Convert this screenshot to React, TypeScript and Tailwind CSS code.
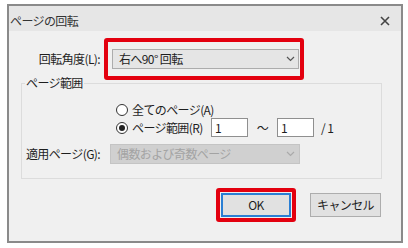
import React from 'react';

const font = { fontFamily: '"Noto Sans CJK JP", "Noto Sans", sans-serif' };

function Chevron({ color }: { color: string }) {
  return (
    <svg width="9" height="6" viewBox="0 0 9 6" className="shrink-0">
      <path d="M1 1 L4.5 4.5 L8 1" fill="none" stroke={color} strokeWidth="1.2" />
    </svg>
  );
}

function Radio({ checked }: { checked?: boolean }) {
  return (
    <span className="w-[12px] h-[12px] rounded-full border border-[#333] bg-white flex items-center justify-center shrink-0">
      {checked && <span className="w-[6px] h-[6px] rounded-full bg-[#222]" />}
    </span>
  );
}

export default function App() {
  return (
    <div className="w-[408px] h-[248px] bg-white pt-[4px] pl-[7px] text-[12px] leading-[14px] tracking-[-0.6px] text-[#1e1e1e]" style={font}>
      <div className="w-[396px] h-[239px] border-2 border-[#8a8a8a] bg-[#f0f0f0] flex flex-col">
        {/* title bar */}
        <div className="h-[25px] shrink-0 bg-[#e6e6e6] flex items-center justify-between pt-[4px] pl-[1px] pr-[11px]">
          <span className="text-[#333]">ページの回転</span>
          <svg width="10" height="10" viewBox="0 0 10 10">
            <path d="M1 1 L9 9 M9 1 L1 9" stroke="#444" strokeWidth="1.6" />
          </svg>
        </div>

        {/* rotation angle */}
        <div className="mt-[7px] flex items-center">
          <span className="w-[91px] flex justify-end whitespace-nowrap">回転角度(L):</span>
          <div className="ml-[4px] border-4 border-[#e3000f] rounded-[3px] pt-[7px] pb-[7px] pl-[4px] pr-[1px]">
            <div className="w-[187px] h-[20px] border border-[#acacac] bg-[#e5e5e5] flex items-center justify-between pl-[6px] pr-[3px]">
              <span>右へ90° 回転</span>
              <Chevron color="#555" />
            </div>
          </div>
        </div>

        {/* page range group */}
        <div className="relative mt-[3px] ml-[12px] w-[361px] border border-[#dcdcdc] pt-[18px] pb-[14px]">
          <span className="absolute left-[3px] top-[-8px] px-[1px] bg-[#f0f0f0]">ページ範囲</span>

          <div className="h-[16px] flex items-center pl-[94px]">
            <Radio />
            <span className="ml-[4px]">全てのページ(A)</span>
          </div>

          <div className="h-[19px] flex items-center pl-[94px]">
            <Radio checked />
            <span className="ml-[4px] w-[79px] whitespace-nowrap">ページ範囲(R)</span>
            <div className="w-[37px] h-[19px] border border-[#8f8f8f] bg-white flex items-center pl-[3px]">1</div>
            <span className="w-[29px] text-center">～</span>
            <div className="w-[37px] h-[19px] border border-[#8f8f8f] bg-white flex items-center pl-[3px]">1</div>
            <span className="ml-[7px]">/ 1</span>
          </div>

          <div className="mt-[7px] h-[20px] flex items-center">
            <span className="w-[78px] flex justify-end whitespace-nowrap">適用ページ(G):</span>
            <div className="ml-[10px] w-[190px] h-[20px] border border-[#c4c4c4] bg-[#d0d0d0] flex items-center justify-between pl-[6px] pr-[4px] text-[#a3a3a3]">
              <span>偶数および奇数ページ</span>
              <Chevron color="#aaa" />
            </div>
          </div>
        </div>

        {/* buttons */}
        <div className="mt-[9px] flex items-center justify-end pr-[20px]">
          <div className="border-4 border-[#e3000f] rounded-[3px] p-px">
            <button className="w-[70px] h-[24px] border-2 border-[#2a7fd4] bg-[#e1e1e1] flex items-center justify-center">OK</button>
          </div>
          <button className="ml-[14px] w-[71px] h-[24px] border border-[#adadad] bg-[#e1e1e1] flex items-center justify-center">キャンセル</button>
        </div>
      </div>
    </div>
  );
}
